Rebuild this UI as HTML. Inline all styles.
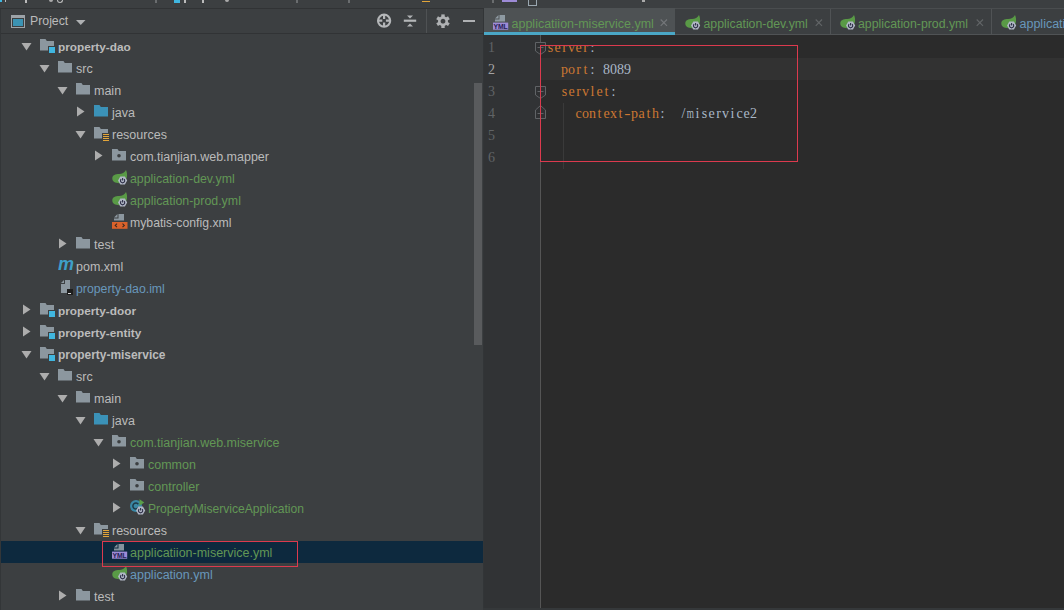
<!DOCTYPE html>
<html><head><meta charset="utf-8"><title>IDE</title>
<style>
html,body{margin:0;padding:0;overflow:hidden;}
html{width:1064px;height:610px;}
body{width:1064px;height:610px;overflow:hidden;position:relative;background:#3c3f41;font-family:"Liberation Sans",sans-serif;font-size:12.5px;color:#bbbbbb;}
div{position:absolute;box-sizing:border-box;}
svg{display:block;}
.tx{height:22px;line-height:22px;white-space:nowrap;}
.sel{left:0;width:483px;height:22px;background:#0d293e;}
.ic{width:16px;height:16px;}
.ar{width:11px;height:11px;}
.ln{left:488px;width:30px;height:22px;line-height:22px;font-family:"Liberation Serif",serif;font-size:14px;}
.cl{left:547px;height:22px;line-height:22px;font-family:"Liberation Serif",serif;font-size:14px;white-space:pre;color:#a9b7c6;}
.c{display:inline-block;width:7px;text-align:center;font-weight:normal;}
.c i{display:inline-block;font-style:normal;}
.k{color:#cc7832;} .n{color:#6897bb;} .s{color:#a9b7c6;}
.tab{top:10.5px;height:26px;line-height:27px;font-size:12.5px;white-space:nowrap;}
.fr{top:0;}
</style></head><body>
<!-- top strip (cut-off navigation bar) -->
<div style="left:0;top:0;width:1064px;height:9px;background:#3c3f41;border-bottom:1px solid #313335;"></div>
<div class="fr" style="left:0;width:2px;height:2px;background:#40b6e0;"></div>
<div class="fr" style="left:5px;width:1px;height:2px;background:#bbb;"></div>
<div class="fr" style="left:25px;width:2px;height:3px;background:#bbb;"></div>
<div class="fr" style="left:49px;width:4px;height:2px;background:#aaa;border-radius:0 0 2px 2px;"></div>
<div class="fr" style="left:57px;width:6px;height:3px;border:1px solid #bbb;border-top:0;border-radius:0 0 3px 3px;"></div>
<div class="fr" style="left:155px;width:2px;height:3px;background:#6a6d6f;"></div>
<div class="fr" style="left:174px;width:6px;height:3px;background:#40b6e0;"></div>
<div class="fr" style="left:184px;width:2px;height:3px;background:#bbb;"></div>
<div class="fr" style="left:202px;width:2px;height:3px;background:#bbb;"></div>
<div class="fr" style="left:225px;width:4px;height:2px;background:#aaa;border-radius:0 0 2px 2px;"></div>
<div class="fr" style="left:296px;width:2px;height:3px;background:#6a6d6f;"></div>
<div class="fr" style="left:348px;width:2px;height:3px;background:#6a6d6f;"></div>
<div class="fr" style="left:422px;width:8px;height:1px;top:1px;background:#e2a53a;"></div>
<div class="fr" style="left:492px;width:2px;height:3px;background:#6a6d6f;"></div>
<div class="fr" style="left:502px;width:15px;height:2px;background:#9d8bd6;"></div>
<div class="fr" style="left:528px;width:9px;height:6px;border:1px solid #9aa7b0;border-top:0;"></div>
<div class="fr" style="left:642px;width:3px;height:2px;background:#aaa;"></div>
<!-- project header -->
<div style="left:0;top:9px;width:1px;height:601px;background:#333638;z-index:3;"></div>
<div style="left:0;top:9px;width:483px;height:25px;background:#3c3f41;border-bottom:1px solid #313335;"></div>
<div style="left:11px;top:15px;"><svg width="14" height="13" viewBox="0 0 14 13"><rect x=".5" y=".5" width="13" height="12" fill="none" stroke="#9da3a8"/><rect x="1" y="1" width="12" height="2" fill="#9da3a8"/><rect x="2" y="4" width="10" height="7" fill="#3b93b3"/></svg></div>
<div class="tx" style="left:30px;top:9px;height:24px;line-height:24px;font-size:12.3px;">Project</div>
<div style="left:76px;top:20px;"><svg width="10" height="6" viewBox="0 0 10 6"><path d="M0 0h9.5L4.75 5z" fill="#afb1b3"/></svg></div>
<!-- header icons -->
<div style="left:376px;top:13px;"><svg width="16" height="16" viewBox="0 0 16 16"><circle cx="8.1" cy="7.7" r="6.1" fill="none" stroke="#b4b6b8" stroke-width="2.1"/><path d="M8.1 1.5v4.4M8.1 9.5v4.4M1.9 7.7h4.4M9.9 7.7h4.4" stroke="#b4b6b8" stroke-width="2.2"/></svg></div>
<div style="left:402px;top:13px;"><svg width="16" height="16" viewBox="0 0 16 16"><path d="M1.8 7.7h12.4" stroke="#b4b6b8" stroke-width="2.2"/><path d="M5 2.6h6L8 5.6zM5 13.6h6L8 10.4z" fill="#afb1b3"/></svg></div>
<div style="left:426px;top:9px;width:1px;height:24px;background:#4f5254;"></div>
<div style="left:435px;top:13px;"><svg width="16" height="16" viewBox="0 0 16 16"><g transform="translate(8 8.2)"><circle r="3.7" fill="none" stroke="#afb1b3" stroke-width="2.6"/><g fill="#afb1b3"><rect x="-1.7" y="-6.8" width="3.4" height="3"/><rect x="-1.7" y="3.8" width="3.4" height="3"/><rect x="-1.7" y="-6.8" width="3.4" height="3" transform="rotate(60)"/><rect x="-1.7" y="3.8" width="3.4" height="3" transform="rotate(60)"/><rect x="-1.7" y="-6.8" width="3.4" height="3" transform="rotate(120)"/><rect x="-1.7" y="3.8" width="3.4" height="3" transform="rotate(120)"/></g></g></svg></div>
<div style="left:463px;top:20px;width:12px;height:2px;background:#afb1b3;"></div>
<!-- tree -->
<div class="ar" style="left:21px;top:41px"><svg width="11" height="11" viewBox="0 0 11 11"><path d="M0.5 2h10L5.5 9.5z" fill="#adadad"/></svg></div>
<div class="ic" style="left:40px;top:37px"><svg width="16" height="16" viewBox="0 0 16 16"><path d="M0 2h5.5l1.3 2H14v5H8v4.5H0z" fill="#9aa7b0" opacity=".85"/><rect x="9" y="10" width="6" height="6" fill="#40b6e0"/></svg></div>
<div class="tx" id="t0" style="left:58px;top:36px;color:#bbbbbb;font-weight:bold;font-size:11.8px;">property-dao</div>
<div class="ar" style="left:39px;top:63px"><svg width="11" height="11" viewBox="0 0 11 11"><path d="M0.5 2h10L5.5 9.5z" fill="#adadad"/></svg></div>
<div class="ic" style="left:58px;top:59px"><svg width="16" height="16" viewBox="0 0 16 16"><path d="M0 2h5.5l1.3 2H14v9.5H0z" fill="#9aa7b0" opacity=".85"/></svg></div>
<div class="tx" id="t1" style="left:76px;top:58px;color:#bbbbbb;">src</div>
<div class="ar" style="left:57px;top:85px"><svg width="11" height="11" viewBox="0 0 11 11"><path d="M0.5 2h10L5.5 9.5z" fill="#adadad"/></svg></div>
<div class="ic" style="left:76px;top:81px"><svg width="16" height="16" viewBox="0 0 16 16"><path d="M0 2h5.5l1.3 2H14v9.5H0z" fill="#9aa7b0" opacity=".85"/></svg></div>
<div class="tx" id="t2" style="left:94px;top:80px;color:#bbbbbb;">main</div>
<div class="ar" style="left:75px;top:106px"><svg width="11" height="11" viewBox="0 0 11 11"><path d="M2 0.5v10L9.5 5.5z" fill="#adadad"/></svg></div>
<div class="ic" style="left:94px;top:103px"><svg width="16" height="16" viewBox="0 0 16 16"><path d="M0 2h5.5l1.3 2H14v9.5H0z" fill="#3b92b8"/></svg></div>
<div class="tx" id="t3" style="left:112px;top:102px;color:#bbbbbb;">java</div>
<div class="ar" style="left:75px;top:129px"><svg width="11" height="11" viewBox="0 0 11 11"><path d="M0.5 2h10L5.5 9.5z" fill="#adadad"/></svg></div>
<div class="ic" style="left:94px;top:125px"><svg width="16" height="16" viewBox="0 0 16 16"><path d="M0 2h5.5l1.3 2H14v4H8v5.5H0z" fill="#9aa7b0" opacity=".85"/><g fill="#e2a53a"><rect x="9" y="9" width="6" height="1"/><rect x="9" y="11" width="6" height="1"/><rect x="9" y="13" width="6" height="1"/><rect x="9" y="15" width="6" height="1"/></g></svg></div>
<div class="tx" id="t4" style="left:112px;top:124px;color:#bbbbbb;">resources</div>
<div class="ar" style="left:93px;top:150px"><svg width="11" height="11" viewBox="0 0 11 11"><path d="M2 0.5v10L9.5 5.5z" fill="#adadad"/></svg></div>
<div class="ic" style="left:112px;top:147px"><svg width="16" height="16" viewBox="0 0 16 16"><path d="M0 2h5.5l1.3 2H14v9.5H0z" fill="#9aa7b0" opacity=".85"/><circle cx="7" cy="8.8" r="1.8" fill="#3c3f41"/></svg></div>
<div class="tx" id="t5" style="left:130px;top:146px;color:#bbbbbb;">com.tianjian.web.mapper</div>
<div class="ic" style="left:112px;top:169px"><svg width="16" height="16" viewBox="0 0 16 16"><path d="M0.3 9.6C0.3 6 3.5 5 7 5c3.2 0 5.5-1.2 7-4C16 5 16 14.2 7.5 14.2 3 14.2 .3 12.8 .3 9.6z" fill="#599a46"/><path d="M15.2 11.6L12.9 15.6H8.3L6 11.6L8.3 7.6H12.9z" fill="#b1b7c6"/><path d="M9.2 10.2A2.1 2.1 0 1 0 12 10.2" fill="none" stroke="#2e3048" stroke-width="1.1"/><path d="M10.6 8.9v2.6" stroke="#2e3048" stroke-width="1.1"/></svg></div>
<div class="tx" id="t6" style="left:130px;top:168px;color:#629755;font-size:12.35px;">application-dev.yml</div>
<div class="ic" style="left:112px;top:191px"><svg width="16" height="16" viewBox="0 0 16 16"><path d="M0.3 9.6C0.3 6 3.5 5 7 5c3.2 0 5.5-1.2 7-4C16 5 16 14.2 7.5 14.2 3 14.2 .3 12.8 .3 9.6z" fill="#599a46"/><path d="M15.2 11.6L12.9 15.6H8.3L6 11.6L8.3 7.6H12.9z" fill="#b1b7c6"/><path d="M9.2 10.2A2.1 2.1 0 1 0 12 10.2" fill="none" stroke="#2e3048" stroke-width="1.1"/><path d="M10.6 8.9v2.6" stroke="#2e3048" stroke-width="1.1"/></svg></div>
<div class="tx" id="t7" style="left:130px;top:190px;color:#629755;font-size:12.4px;">application-prod.yml</div>
<div class="ic" style="left:112px;top:213px"><svg width="16" height="16" viewBox="0 0 16 16"><path d="M6.5 1H12v6.6H2V5.5h4.5z" fill="#9aa7b0" opacity=".85"/><path d="M2 4.5L5.5 1v3.5z" fill="#9aa7b0" opacity=".85"/><rect x="0" y="9" width="15.5" height="6.8" fill="#d9622b"/><path d="M5 10.6L3.2 12.4 5 14.2M10.5 10.6L12.3 12.4 10.5 14.2" stroke="#3c2a20" stroke-width="1.1" fill="none"/></svg></div>
<div class="tx" id="t8" style="left:130px;top:212px;color:#bbbbbb;font-size:12.25px;">mybatis-config.xml</div>
<div class="ar" style="left:57px;top:238px"><svg width="11" height="11" viewBox="0 0 11 11"><path d="M2 0.5v10L9.5 5.5z" fill="#adadad"/></svg></div>
<div class="ic" style="left:76px;top:235px"><svg width="16" height="16" viewBox="0 0 16 16"><path d="M0 2h5.5l1.3 2H14v9.5H0z" fill="#9aa7b0" opacity=".85"/></svg></div>
<div class="tx" id="t9" style="left:94px;top:234px;color:#bbbbbb;">test</div>
<div class="ic" style="left:58px;top:257px"><svg width="16" height="16" viewBox="0 0 16 16"><text x="0" y="13" font-family="Liberation Sans" font-size="18" font-style="italic" font-weight="bold" fill="#3e9fc9">m</text></svg></div>
<div class="tx" id="t10" style="left:76px;top:256px;color:#bbbbbb;">pom.xml</div>
<div class="ic" style="left:58px;top:279px"><svg width="16" height="16" viewBox="0 0 16 16"><path d="M7 1h5v13H3V5h4z" fill="#9aa7b0" opacity=".85"/><path d="M3 4l3-3v3z" fill="#9aa7b0" opacity=".85"/><rect x="9" y="10" width="6" height="6" fill="#1e1e1e"/><rect x="10" y="14" width="3" height="1" fill="#ddd"/></svg></div>
<div class="tx" id="t11" style="left:76px;top:278px;color:#6897bb;font-size:12.3px;">property-dao.iml</div>
<div class="ar" style="left:21px;top:304px"><svg width="11" height="11" viewBox="0 0 11 11"><path d="M2 0.5v10L9.5 5.5z" fill="#adadad"/></svg></div>
<div class="ic" style="left:40px;top:301px"><svg width="16" height="16" viewBox="0 0 16 16"><path d="M0 2h5.5l1.3 2H14v5H8v4.5H0z" fill="#9aa7b0" opacity=".85"/><rect x="9" y="10" width="6" height="6" fill="#40b6e0"/></svg></div>
<div class="tx" id="t12" style="left:58px;top:300px;color:#bbbbbb;font-weight:bold;font-size:11.8px;">property-door</div>
<div class="ar" style="left:21px;top:326px"><svg width="11" height="11" viewBox="0 0 11 11"><path d="M2 0.5v10L9.5 5.5z" fill="#adadad"/></svg></div>
<div class="ic" style="left:40px;top:323px"><svg width="16" height="16" viewBox="0 0 16 16"><path d="M0 2h5.5l1.3 2H14v5H8v4.5H0z" fill="#9aa7b0" opacity=".85"/><rect x="9" y="10" width="6" height="6" fill="#40b6e0"/></svg></div>
<div class="tx" id="t13" style="left:58px;top:322px;color:#bbbbbb;font-weight:bold;font-size:11.8px;">property-entity</div>
<div class="ar" style="left:21px;top:349px"><svg width="11" height="11" viewBox="0 0 11 11"><path d="M0.5 2h10L5.5 9.5z" fill="#adadad"/></svg></div>
<div class="ic" style="left:40px;top:345px"><svg width="16" height="16" viewBox="0 0 16 16"><path d="M0 2h5.5l1.3 2H14v5H8v4.5H0z" fill="#9aa7b0" opacity=".85"/><rect x="9" y="10" width="6" height="6" fill="#40b6e0"/></svg></div>
<div class="tx" id="t14" style="left:58px;top:344px;color:#bbbbbb;font-weight:bold;font-size:11.8px;font-size:11.95px;">property-miservice</div>
<div class="ar" style="left:39px;top:371px"><svg width="11" height="11" viewBox="0 0 11 11"><path d="M0.5 2h10L5.5 9.5z" fill="#adadad"/></svg></div>
<div class="ic" style="left:58px;top:367px"><svg width="16" height="16" viewBox="0 0 16 16"><path d="M0 2h5.5l1.3 2H14v9.5H0z" fill="#9aa7b0" opacity=".85"/></svg></div>
<div class="tx" id="t15" style="left:76px;top:366px;color:#bbbbbb;">src</div>
<div class="ar" style="left:57px;top:393px"><svg width="11" height="11" viewBox="0 0 11 11"><path d="M0.5 2h10L5.5 9.5z" fill="#adadad"/></svg></div>
<div class="ic" style="left:76px;top:389px"><svg width="16" height="16" viewBox="0 0 16 16"><path d="M0 2h5.5l1.3 2H14v9.5H0z" fill="#9aa7b0" opacity=".85"/></svg></div>
<div class="tx" id="t16" style="left:94px;top:388px;color:#bbbbbb;">main</div>
<div class="ar" style="left:75px;top:415px"><svg width="11" height="11" viewBox="0 0 11 11"><path d="M0.5 2h10L5.5 9.5z" fill="#adadad"/></svg></div>
<div class="ic" style="left:94px;top:411px"><svg width="16" height="16" viewBox="0 0 16 16"><path d="M0 2h5.5l1.3 2H14v9.5H0z" fill="#3b92b8"/></svg></div>
<div class="tx" id="t17" style="left:112px;top:410px;color:#bbbbbb;">java</div>
<div class="ar" style="left:93px;top:437px"><svg width="11" height="11" viewBox="0 0 11 11"><path d="M0.5 2h10L5.5 9.5z" fill="#adadad"/></svg></div>
<div class="ic" style="left:112px;top:433px"><svg width="16" height="16" viewBox="0 0 16 16"><path d="M0 2h5.5l1.3 2H14v9.5H0z" fill="#9aa7b0" opacity=".85"/><circle cx="7" cy="8.8" r="1.8" fill="#3c3f41"/></svg></div>
<div class="tx" id="t18" style="left:130px;top:432px;color:#629755;">com.tianjian.web.miservice</div>
<div class="ar" style="left:111px;top:458px"><svg width="11" height="11" viewBox="0 0 11 11"><path d="M2 0.5v10L9.5 5.5z" fill="#adadad"/></svg></div>
<div class="ic" style="left:130px;top:455px"><svg width="16" height="16" viewBox="0 0 16 16"><path d="M0 2h5.5l1.3 2H14v9.5H0z" fill="#9aa7b0" opacity=".85"/><circle cx="7" cy="8.8" r="1.8" fill="#3c3f41"/></svg></div>
<div class="tx" id="t19" style="left:148px;top:454px;color:#629755;">common</div>
<div class="ar" style="left:111px;top:480px"><svg width="11" height="11" viewBox="0 0 11 11"><path d="M2 0.5v10L9.5 5.5z" fill="#adadad"/></svg></div>
<div class="ic" style="left:130px;top:477px"><svg width="16" height="16" viewBox="0 0 16 16"><path d="M0 2h5.5l1.3 2H14v9.5H0z" fill="#9aa7b0" opacity=".85"/><circle cx="7" cy="8.8" r="1.8" fill="#3c3f41"/></svg></div>
<div class="tx" id="t20" style="left:148px;top:476px;color:#629755;">controller</div>
<div class="ar" style="left:111px;top:502px"><svg width="11" height="11" viewBox="0 0 11 11"><path d="M2 0.5v10L9.5 5.5z" fill="#adadad"/></svg></div>
<div class="ic" style="left:130px;top:499px"><svg width="16" height="16" viewBox="0 0 16 16"><circle cx="6" cy="7" r="6" fill="#3a88a6"/><path d="M8.3 5.2A3 3 0 1 0 8.3 8.8" fill="none" stroke="#1e3846" stroke-width="1.5"/><path d="M9.5 0.2l4.8 3.3-4.8 3.3z" fill="#5a9f48"/><path d="M15.2 11.6L12.9 15.6H8.3L6 11.6L8.3 7.6H12.9z" fill="#b1b7c6"/><path d="M9.2 10.2A2.1 2.1 0 1 0 12 10.2" fill="none" stroke="#2e3048" stroke-width="1.1"/><path d="M10.6 8.9v2.6" stroke="#2e3048" stroke-width="1.1"/></svg></div>
<div class="tx" id="t21" style="left:148px;top:498px;color:#629755;font-size:12.1px;">PropertyMiserviceApplication</div>
<div class="ar" style="left:75px;top:525px"><svg width="11" height="11" viewBox="0 0 11 11"><path d="M0.5 2h10L5.5 9.5z" fill="#adadad"/></svg></div>
<div class="ic" style="left:94px;top:521px"><svg width="16" height="16" viewBox="0 0 16 16"><path d="M0 2h5.5l1.3 2H14v4H8v5.5H0z" fill="#9aa7b0" opacity=".85"/><g fill="#e2a53a"><rect x="9" y="9" width="6" height="1"/><rect x="9" y="11" width="6" height="1"/><rect x="9" y="13" width="6" height="1"/><rect x="9" y="15" width="6" height="1"/></g></svg></div>
<div class="tx" id="t22" style="left:112px;top:520px;color:#bbbbbb;">resources</div>
<div class="sel" style="top:541px"></div>
<div class="ic" style="left:112px;top:543px"><svg width="16" height="16" viewBox="0 0 16 16"><path d="M6.5 1H12v6.6H2V5.5h4.5z" fill="#9aa7b0" opacity=".85"/><path d="M2 4.5L5.5 1v3.5z" fill="#9aa7b0" opacity=".85"/><rect x="0" y="8.6" width="15.2" height="7.1" fill="#9d8bd6"/><text x="7.6" y="14.7" font-family="Liberation Sans" font-size="6.8" font-weight="bold" fill="#251d55" text-anchor="middle">YML</text></svg></div>
<div class="tx" id="t23" style="left:130px;top:542px;color:#629755;">applicatiion-miservice.yml</div>
<div class="ic" style="left:112px;top:565px"><svg width="16" height="16" viewBox="0 0 16 16"><path d="M0.3 9.6C0.3 6 3.5 5 7 5c3.2 0 5.5-1.2 7-4C16 5 16 14.2 7.5 14.2 3 14.2 .3 12.8 .3 9.6z" fill="#599a46"/><path d="M15.2 11.6L12.9 15.6H8.3L6 11.6L8.3 7.6H12.9z" fill="#b1b7c6"/><path d="M9.2 10.2A2.1 2.1 0 1 0 12 10.2" fill="none" stroke="#2e3048" stroke-width="1.1"/><path d="M10.6 8.9v2.6" stroke="#2e3048" stroke-width="1.1"/></svg></div>
<div class="tx" id="t24" style="left:130px;top:564px;color:#6897bb;">application.yml</div>
<div class="ar" style="left:57px;top:590px"><svg width="11" height="11" viewBox="0 0 11 11"><path d="M2 0.5v10L9.5 5.5z" fill="#adadad"/></svg></div>
<div class="ic" style="left:76px;top:587px"><svg width="16" height="16" viewBox="0 0 16 16"><path d="M0 2h5.5l1.3 2H14v9.5H0z" fill="#9aa7b0" opacity=".85"/></svg></div>
<div class="tx" id="t25" style="left:94px;top:586px;color:#bbbbbb;">test</div>
<!-- tree selection outline -->
<div style="left:102px;top:541px;width:196px;height:26px;border:1px solid #dc3a4e;"></div>
<!-- scrollbar -->
<div style="left:474px;top:83px;width:8px;height:262px;background:#595b5d;"></div>
<div style="left:483px;top:9px;width:1px;height:601px;background:#323537;"></div>
<!-- tabs bar -->
<div style="left:484px;top:8px;width:580px;height:27px;background:#3c3f41;border-top:1px solid #4a4d4f;border-bottom:1px solid #505355;"></div>
<div style="left:484px;top:8px;width:191px;height:27px;background:#4e5254;"></div>
<div style="left:484px;top:32px;width:191px;height:3px;background:#4aa7c6;"></div>
<div style="left:493px;top:14px;"><svg width="16" height="16" viewBox="0 0 16 16"><path d="M6.5 1H12v6.6H2V5.5h4.5z" fill="#9aa7b0" opacity=".85"/><path d="M2 4.5L5.5 1v3.5z" fill="#9aa7b0" opacity=".85"/><rect x="0" y="8.6" width="15.2" height="7.1" fill="#9d8bd6"/><text x="7.6" y="14.7" font-family="Liberation Sans" font-size="6.8" font-weight="bold" fill="#251d55" text-anchor="middle">YML</text></svg></div>
<div class="tab" style="left:511.5px;color:#629755;">applicatiion-miservice.yml</div>
<div style="left:660px;top:19px;"><svg width="8" height="8" viewBox="0 0 8 8"><path d="M0.7 0.5l6.3 6.3M7 0.5L0.7 6.8" stroke="#74777a" stroke-width="1.1"/></svg></div>
<div style="left:684.5px;top:14px;"><svg width="16" height="16" viewBox="0 0 16 16"><path d="M0.3 9.6C0.3 6 3.5 5 7 5c3.2 0 5.5-1.2 7-4C16 5 16 14.2 7.5 14.2 3 14.2 .3 12.8 .3 9.6z" fill="#599a46"/><path d="M15.2 11.6L12.9 15.6H8.3L6 11.6L8.3 7.6H12.9z" fill="#b1b7c6"/><path d="M9.2 10.2A2.1 2.1 0 1 0 12 10.2" fill="none" stroke="#2e3048" stroke-width="1.1"/><path d="M10.6 8.9v2.6" stroke="#2e3048" stroke-width="1.1"/></svg></div>
<div class="tab" style="left:703.5px;font-size:12.3px;color:#629755;">application-dev.yml</div>
<div style="left:815px;top:19px;"><svg width="8" height="8" viewBox="0 0 8 8"><path d="M0.7 0.5l6.3 6.3M7 0.5L0.7 6.8" stroke="#626567" stroke-width="1.1"/></svg></div>
<div style="left:830px;top:9px;width:1px;height:26px;background:#505355;"></div>
<div style="left:839.5px;top:14px;"><svg width="16" height="16" viewBox="0 0 16 16"><path d="M0.3 9.6C0.3 6 3.5 5 7 5c3.2 0 5.5-1.2 7-4C16 5 16 14.2 7.5 14.2 3 14.2 .3 12.8 .3 9.6z" fill="#599a46"/><path d="M15.2 11.6L12.9 15.6H8.3L6 11.6L8.3 7.6H12.9z" fill="#b1b7c6"/><path d="M9.2 10.2A2.1 2.1 0 1 0 12 10.2" fill="none" stroke="#2e3048" stroke-width="1.1"/><path d="M10.6 8.9v2.6" stroke="#2e3048" stroke-width="1.1"/></svg></div>
<div class="tab" style="left:858px;font-size:12.3px;color:#629755;">application-prod.yml</div>
<div style="left:976px;top:19px;"><svg width="8" height="8" viewBox="0 0 8 8"><path d="M0.7 0.5l6.3 6.3M7 0.5L0.7 6.8" stroke="#626567" stroke-width="1.1"/></svg></div>
<div style="left:991px;top:9px;width:1px;height:26px;background:#505355;"></div>
<div style="left:1000.5px;top:14px;"><svg width="16" height="16" viewBox="0 0 16 16"><path d="M0.3 9.6C0.3 6 3.5 5 7 5c3.2 0 5.5-1.2 7-4C16 5 16 14.2 7.5 14.2 3 14.2 .3 12.8 .3 9.6z" fill="#599a46"/><path d="M15.2 11.6L12.9 15.6H8.3L6 11.6L8.3 7.6H12.9z" fill="#b1b7c6"/><path d="M9.2 10.2A2.1 2.1 0 1 0 12 10.2" fill="none" stroke="#2e3048" stroke-width="1.1"/><path d="M10.6 8.9v2.6" stroke="#2e3048" stroke-width="1.1"/></svg></div>
<div class="tab" style="left:1019.5px;color:#6897bb;">application.yml</div>
<!-- editor -->
<div style="left:484px;top:35px;width:57px;height:575px;background:#313335;border-right:1px solid #555555;"></div>
<div style="left:541px;top:35px;width:523px;height:575px;background:#2b2b2b;"></div>
<div style="left:541px;top:58px;width:523px;height:22px;background:#323232;"></div>
<div style="left:563px;top:103px;width:1px;height:66px;background:#3a3a3a;"></div>
<div style="left:535px;top:42px;"><svg width="11" height="13" viewBox="0 0 11 13"><path d="M0.5 0.5h10v8.5l-5 3.5-5-3.5z" fill="#2f3133" stroke="#606366"/><path d="M2.5 5.5h6" stroke="#606366"/></svg></div>
<div style="left:535px;top:86px;"><svg width="11" height="13" viewBox="0 0 11 13"><path d="M0.5 0.5h10v8.5l-5 3.5-5-3.5z" fill="#2f3133" stroke="#606366"/><path d="M2.5 5.5h6" stroke="#606366"/></svg></div>
<div style="left:535px;top:105px;"><svg width="11" height="14" viewBox="0 0 11 14"><path d="M0.5 13.5h10V5l-5-4.5-5 4.5z" fill="#2f3133" stroke="#606366"/><path d="M2.5 8.5h6" stroke="#606366"/></svg></div>
<div class="ln" style="top:37px;color:#606366">1</div>
<div class="cl" style="top:37px"><b class="c k">s</b><b class="c k">e</b><b class="c k">r</b><b class="c k">v</b><b class="c k">e</b><b class="c k">r</b><b class="c s">:</b></div>
<div class="ln" style="top:59px;color:#a4a3a3">2</div>
<div class="cl" style="top:59px"><b class="c"> </b><b class="c"> </b><b class="c k">p</b><b class="c k">o</b><b class="c k">r</b><b class="c k">t</b><b class="c s">:</b><b class="c"> </b><b class="c s">8</b><b class="c s">0</b><b class="c s">8</b><b class="c s">9</b></div>
<div class="ln" style="top:81px;color:#606366">3</div>
<div class="cl" style="top:81px"><b class="c"> </b><b class="c"> </b><b class="c k">s</b><b class="c k">e</b><b class="c k">r</b><b class="c k">v</b><b class="c k">l</b><b class="c k">e</b><b class="c k">t</b><b class="c s">:</b></div>
<div class="ln" style="top:103px;color:#606366">4</div>
<div class="cl" style="top:103px"><b class="c"> </b><b class="c"> </b><b class="c"> </b><b class="c"> </b><b class="c k">c</b><b class="c k">o</b><b class="c k">n</b><b class="c k">t</b><b class="c k">e</b><b class="c k">x</b><b class="c k">t</b><b class="c k"><i style="transform:scaleX(1.35)">-</i></b><b class="c k">p</b><b class="c k">a</b><b class="c k">t</b><b class="c k">h</b><b class="c s">:</b><b class="c"> </b><b class="c"> </b><b class="c s">/</b><b class="c s"><i style="transform:scaleX(.66);margin:0 -1.95px">m</i></b><b class="c s">i</b><b class="c s">s</b><b class="c s">e</b><b class="c s">r</b><b class="c s">v</b><b class="c s">i</b><b class="c s">c</b><b class="c s">e</b><b class="c s">2</b></div>
<div class="ln" style="top:125px;color:#606366">5</div>
<div class="ln" style="top:147px;color:#606366">6</div>
<div style="left:483px;top:608px;width:581px;height:2px;background:#35383a;"></div>
<!-- red annotation -->
<div style="left:540px;top:45px;width:258px;height:117px;border:1px solid #dc3a4e;"></div>
</body></html>
